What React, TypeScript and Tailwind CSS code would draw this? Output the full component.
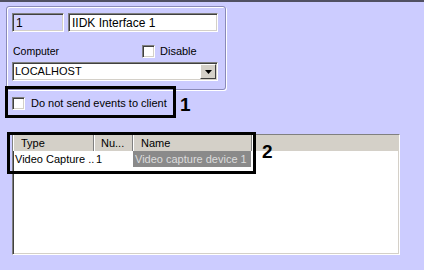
import React from 'react';

const sunken =
  'border border-t-[#808080] border-l-[#808080] border-b-white border-r-white shadow-[inset_1px_1px_0_#404040,inset_-1px_-1px_0_#d4d0c8]';

const Checkbox: React.FC = () => (
  <span className={`block w-[13px] h-[13px] bg-white ${sunken}`} />
);

export default function App() {
  return (
    <div className="relative w-[424px] h-[270px] overflow-hidden bg-[#ccccff] text-[11px] leading-none text-black whitespace-nowrap font-['Liberation_Sans',Arial,sans-serif]">
      {/* Top edge */}
      <div className="h-[2px] bg-[#505062]" />

      {/* Group box */}
      <div className="ml-[6px] mt-[4px] w-[220px] h-[84px] rounded-[3px] border border-[#8a8ab8] shadow-[inset_1px_1px_0_#fff,1px_1px_0_#fff] pl-[5px] pt-[6px]">
        <div className="flex gap-[4px]">
          <div className={`w-[52px] h-[19px] bg-[#d2d2ff] flex items-center pl-[3px] text-[12px] ${sunken}`}>1</div>
          <div className={`w-[150px] h-[19px] bg-white flex items-center pl-[3px] text-[12px] ${sunken}`}>
            IIDK Interface 1
          </div>
        </div>

        <div className="mt-[13px] h-[13px] flex items-center">
          <span className="w-[130px] pl-[1px] text-[10.5px]">Computer</span>
          <Checkbox />
          <span className="ml-[5px] text-[11px]">Disable</span>
        </div>

        <div className={`mt-[4px] w-[206px] h-[19px] bg-white flex items-center justify-between pl-[2px] pr-[1px] ${sunken}`}>
          <span className="text-[11px]">LOCALHOST</span>
          <div className="w-[16px] h-[15px] bg-[#d4d0c8] border border-t-white border-l-white border-b-[#404040] border-r-[#404040] flex items-center justify-center">
            <svg width="7" height="4" viewBox="0 0 7 4">
              <path d="M0 0h7L3.5 4z" fill="#000" />
            </svg>
          </div>
        </div>
      </div>

      {/* Send events checkbox */}
      <div className="ml-[12px] mt-[7px] h-[13px] flex items-center gap-[6px]">
        <Checkbox />
        <span className="text-[11px]">Do not send events to client</span>
      </div>

      {/* List view */}
      <div className={`ml-[12px] mt-[24px] w-[388px] h-[121px] bg-white overflow-hidden ${sunken}`}>
        <div className="flex h-[16px] bg-[#d4d0c8] text-[11px]">
          <div className="w-[81px] pl-[7px] flex items-center border-l border-white border-r border-r-[#808080]">Type</div>
          <div className="w-[39px] pl-[6px] flex items-center border-l border-white border-r border-r-[#808080]">Nu...</div>
          <div className="w-[119px] pl-[7px] flex items-center border-l border-white border-r border-r-[#808080]">Name</div>
          <div className="flex-1 border-l border-white" />
        </div>
        <div className="flex h-[16px] text-[11px]">
          <div className="w-[81px] pl-[2px] flex items-center overflow-hidden">Video Capture ..</div>
          <div className="w-[39px] pl-[2px] flex items-center">1</div>
          <div className="w-[118px] pl-[2px] flex items-center overflow-hidden bg-[#8a8a8a] text-[#dcdcdc]">Video capture device 1</div>
        </div>
      </div>

      {/* Annotations */}
      <div className="absolute left-[5px] top-[86px] w-[171px] h-[32px] border-[3px] border-black" />
      <span className="absolute left-[180px] top-[95px] text-[19px] font-bold">1</span>
      <div className="absolute left-[7px] top-[132px] w-[249px] h-[42px] border-[3px] border-black" />
      <span className="absolute left-[262px] top-[142px] text-[19px] font-bold">2</span>
    </div>
  );
}
